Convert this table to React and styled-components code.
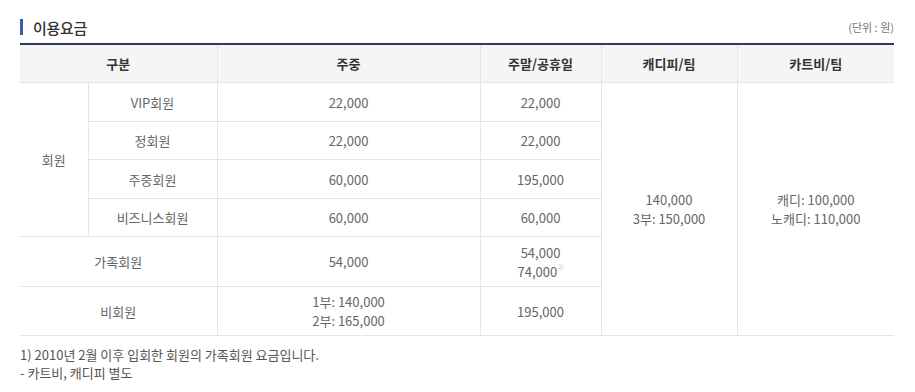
import React from "react";
import styled, { createGlobalStyle } from "styled-components";

const Global = createGlobalStyle`
  html, body { margin: 0; padding: 0; background: #fff; }
  body { font-family: "Noto Sans CJK KR", "Noto Sans", sans-serif; }
`;

const Page = styled.div`
  padding: 17px 21px 0 20px;
  width: 874px;
`;

const Head = styled.div`
  display: flex;
  align-items: center;
  justify-content: space-between;
  height: 20px;
  margin-bottom: 6px;
`;

const Title = styled.h2`
  margin: 0;
  display: flex;
  align-items: center;
  font-size: 15px;
  font-weight: 500;
  color: #333;
  letter-spacing: -0.3px;
  &::before {
    content: "";
    display: block;
    width: 3px;
    height: 16px;
    background: #3a5bb0;
    margin-right: 10px;
  }
`;

const Unit = styled.span`
  font-size: 11px;
  color: #777;
`;

const Table = styled.table`
  width: 874px;
  border-collapse: collapse;
  table-layout: fixed;
  border-top: 2px solid #2f3a55;
  font-size: 13px;
  line-height: 19px;
`;

const Th = styled.th`
  height: 37px;
  padding: 0;
  background: #f5f5f5;
  color: #333;
  font-weight: 700;
  border-bottom: 1px solid #e5e5e5;
  border-left: 1px solid #e5e5e5;
  &:first-child { border-left: none; }
`;

const Td = styled.td`
  height: ${(p) => p.$h || 37}px;
  padding: 0;
  text-align: center;
  vertical-align: middle;
  color: #666;
  border-bottom: 1px solid #e5e5e5;
  border-left: ${(p) => (p.$first ? "none" : "1px solid #e5e5e5")};
`;

const Sup = styled.sup`
  font-size: 6px;
  color: #bbb;
  vertical-align: top;
  line-height: 10px;
  margin-left: 1px;
`;

const Notes = styled.div`
  margin-top: 10px;
  font-size: 13px;
  line-height: 18px;
  color: #555;
`;

export default function App() {
  return (
    <>
      <Global />
      <Page>
        <Head>
          <Title>이용요금</Title>
          <Unit>(단위 : 원)</Unit>
        </Head>
        <Table>
          <colgroup>
            <col style={{ width: 68 }} />
            <col style={{ width: 129 }} />
            <col style={{ width: 263 }} />
            <col style={{ width: 121 }} />
            <col style={{ width: 136 }} />
            <col style={{ width: 157 }} />
          </colgroup>
          <thead>
            <tr>
              <Th colSpan={2}>구분</Th>
              <Th>주중</Th>
              <Th>주말/공휴일</Th>
              <Th>캐디피/팀</Th>
              <Th>카트비/팀</Th>
            </tr>
          </thead>
          <tbody>
            <tr>
              <Td $first $h={38} rowSpan={4}>회원</Td>
              <Td $h={38}>VIP회원</Td>
              <Td $h={38}>22,000</Td>
              <Td $h={38}>22,000</Td>
              <Td rowSpan={6}>140,000<br />3부: 150,000</Td>
              <Td rowSpan={6}>캐디: 100,000<br />노캐디: 110,000</Td>
            </tr>
            <tr>
              <Td>정회원</Td>
              <Td>22,000</Td>
              <Td>22,000</Td>
            </tr>
            <tr>
              <Td $h={38}>주중회원</Td>
              <Td $h={38}>60,000</Td>
              <Td $h={38}>195,000</Td>
            </tr>
            <tr>
              <Td>비즈니스회원</Td>
              <Td>60,000</Td>
              <Td>60,000</Td>
            </tr>
            <tr>
              <Td $first $h={49} colSpan={2}>가족회원</Td>
              <Td $h={49}>54,000</Td>
              <Td $h={49}>54,000<br />74,000<Sup>1)</Sup></Td>
            </tr>
            <tr>
              <Td $first $h={48} colSpan={2}>비회원</Td>
              <Td $h={48}>1부: 140,000<br />2부: 165,000</Td>
              <Td $h={48}>195,000</Td>
            </tr>
          </tbody>
        </Table>
        <Notes>
          1) 2010년 2월 이후 입회한 회원의 가족회원 요금입니다.<br />
          - 카트비, 캐디피 별도
        </Notes>
      </Page>
    </>
  );
}
